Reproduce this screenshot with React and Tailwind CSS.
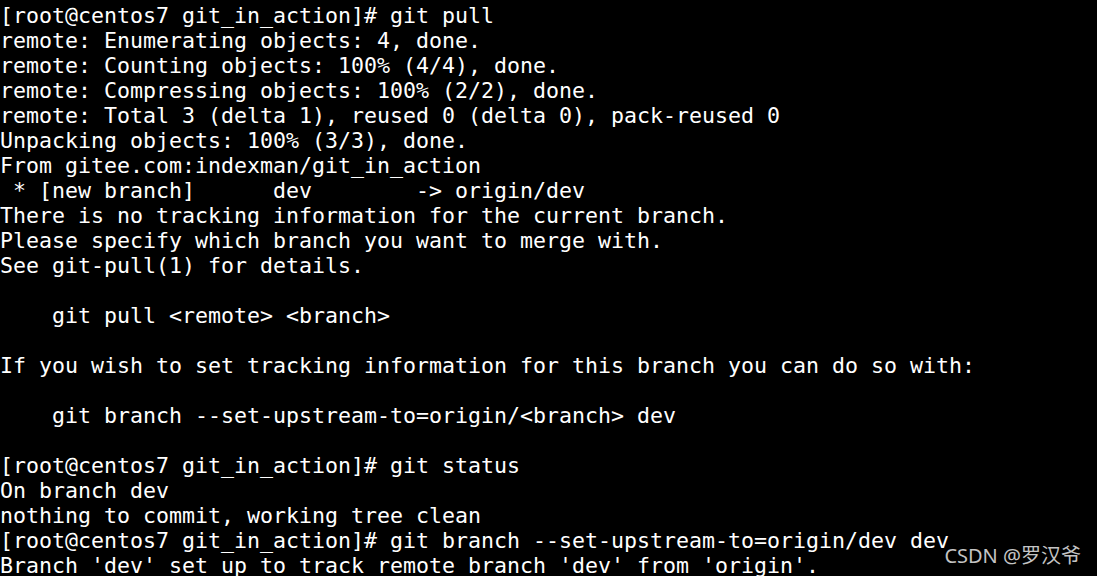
const lines = [
  "[root@centos7 git_in_action]# git pull",
  "remote: Enumerating objects: 4, done.",
  "remote: Counting objects: 100% (4/4), done.",
  "remote: Compressing objects: 100% (2/2), done.",
  "remote: Total 3 (delta 1), reused 0 (delta 0), pack-reused 0",
  "Unpacking objects: 100% (3/3), done.",
  "From gitee.com:indexman/git_in_action",
  " * [new branch]      dev        -> origin/dev",
  "There is no tracking information for the current branch.",
  "Please specify which branch you want to merge with.",
  "See git-pull(1) for details.",
  "",
  "    git pull <remote> <branch>",
  "",
  "If you wish to set tracking information for this branch you can do so with:",
  "",
  "    git branch --set-upstream-to=origin/<branch> dev",
  "",
  "[root@centos7 git_in_action]# git status",
  "On branch dev",
  "nothing to commit, working tree clean",
  "[root@centos7 git_in_action]# git branch --set-upstream-to=origin/dev dev",
  "Branch 'dev' set up to track remote branch 'dev' from 'origin'.",
];

export default function App() {
  return (
    <div className="relative w-[1097px] h-[576px] overflow-hidden bg-black">
      <div className="pt-[3px] font-['DejaVu_Sans_Mono',monospace] text-[21.6px] leading-[25px] text-white">
        {lines.map((line, i) => (
          <div key={i} className="h-[25px] whitespace-pre">
            {line}
          </div>
        ))}
      </div>
      <div className="absolute right-[16px] bottom-[7px] font-['Noto_Sans','Noto_Sans_CJK_SC',sans-serif] text-[20px] leading-[26px] text-[#c4c4c4]">
        CSDN @罗汉爷
      </div>
    </div>
  );
}
